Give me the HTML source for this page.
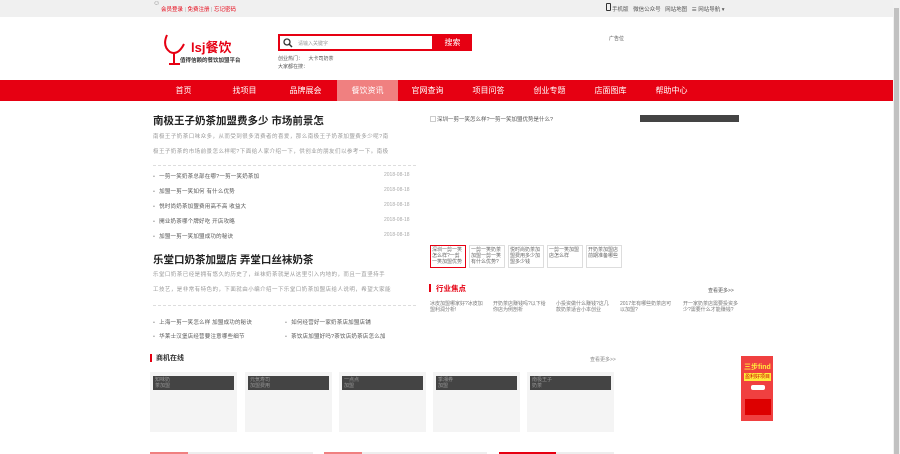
<!DOCTYPE html>
<html><head><meta charset="utf-8"><style>
*{margin:0;padding:0;box-sizing:border-box}
body{width:900px;height:454px;overflow:hidden;background:#fff;font-family:"Liberation Sans","Noto Sans CJK SC",sans-serif;font-size:6px;color:#666;position:relative}
.a{position:absolute;white-space:nowrap}
.top{position:absolute;left:0;top:0;width:893px;height:17px;background:#f0f0f0}
.nav{position:absolute;left:0;top:80px;width:893px;height:21px;background:#e60012}
.nav span{position:absolute;top:0;width:61px;height:21px;line-height:21px;text-align:center;color:#fff;font-size:8px}
.sb{position:absolute;right:0;top:0;width:7px;height:454px;background:#f1f1f1}
.sb i{position:absolute;left:1px;top:8px;width:5px;height:446px;background:#c1c1c1}
h2{position:absolute;font-size:10.5px;color:#222;font-weight:bold;white-space:nowrap}
.sm{color:#999;font-size:5.5px;letter-spacing:.45px}
.li{position:absolute;font-size:5.5px;color:#555;white-space:nowrap;letter-spacing:.2px}
.li:before{content:"•";color:#999;margin-right:4px}
.dt{position:absolute;font-size:5px;color:#aaa}
.dash{position:absolute;height:0;border-top:1px dashed #ddd}
.th{position:absolute;top:245px;width:36px;height:23px;border:1px solid #ddd;font-size:5px;color:#666;line-height:6px;padding:1px;overflow:hidden;white-space:normal}
.card{position:absolute;top:372px;width:87px;height:60px;background:#f4f4f4}
.card i{position:absolute;left:3px;top:4px;right:3px;height:14px;background:#444}
.card b{position:absolute;left:5px;top:5px;font-weight:normal;font-size:5px;color:#999;line-height:6px}
</style></head><body>
<div class="top"></div>
<div class="a" style="left:153px;top:0px;font-size:7px;color:#888">&#9786;</div>
<div class="a" style="left:161px;top:5px;font-size:5.5px;color:#e60012">会员登录 <span style="color:#aaa">|</span> 免费注册 <span style="color:#aaa">|</span> 忘记密码</div>
<div class="a" style="left:606px;top:3px;width:5px;height:8px;border:1px solid #333;border-radius:1px"></div>
<div class="a" style="left:612px;top:5px;font-size:5.5px;color:#555">手机版 &nbsp; 微信公众号 &nbsp; 网站地图 &nbsp; ☰ 网站导航 ▾</div>

<svg class="a" style="left:162px;top:32px" width="26" height="36" viewBox="0 0 26 36"><path d="M5 3 Q0 14 8 20 Q16 24 22 12" fill="none" stroke="#e60012" stroke-width="2"/><path d="M12 21 L12 31 M7 32 L18 32" stroke="#e60012" stroke-width="2"/></svg>
<div class="a" style="left:191px;top:37px;font-size:13px;color:#e60012;font-weight:bold">lsj餐饮</div>
<div class="a" style="left:180px;top:56px;font-size:5.5px;color:#333;font-weight:bold">值得信赖的餐饮加盟平台</div>

<div class="a" style="left:278px;top:34px;width:156px;height:17px;border:2px solid #e60012"></div>
<svg class="a" style="left:283px;top:38px" width="10" height="10"><circle cx="4" cy="4" r="3" fill="none" stroke="#333" stroke-width="1.3"/><path d="M6 6 L9 9" stroke="#333" stroke-width="1.5"/></svg>
<div class="a" style="left:298px;top:40px;font-size:5px;color:#999">请输入关键字</div>
<div class="a" style="left:433px;top:34px;width:39px;height:17px;background:#e60012;color:#fff;font-size:8px;text-align:center;line-height:17px">搜索</div>
<div class="a" style="left:278px;top:55px;font-size:5px;color:#555">创业热门： &nbsp;&nbsp; 大卡司奶茶</div>
<div class="a" style="left:278px;top:63px;font-size:5px;color:#555">大家都在搜：</div>
<div class="a" style="left:609px;top:35px;font-size:5px;color:#555">广告位</div>

<div class="nav">
<span style="left:153px">首页</span><span style="left:214px">找项目</span><span style="left:275px">品牌展会</span><span style="left:337px;background:#f08080">餐饮资讯</span><span style="left:397px">官网查询</span><span style="left:458px">项目问答</span><span style="left:519px">创业专题</span><span style="left:580px">店面图库</span><span style="left:641px">帮助中心</span>
</div>

<h2 style="left:153px;top:113px">南极王子奶茶加盟费多少 市场前景怎</h2>
<div class="a sm" style="left:153px;top:132px">南极王子奶茶口味众多，从而受到很多消费者的喜爱，那么南极王子奶茶加盟费多少呢?南</div>
<div class="a sm" style="left:153px;top:147px">极王子奶茶的市场前景怎么样呢?下面给人家介绍一下，供创业的朋友们以参考一下。南极</div>
<div class="dash" style="left:153px;top:165px;width:263px"></div>
<div class="li" style="left:153px;top:172px">一剪一笑奶茶总部在哪?一剪一笑奶茶加</div><div class="dt" style="left:384px;top:172px">2018-08-18</div>
<div class="li" style="left:153px;top:187px">加盟一剪一笑如何 有什么优势</div><div class="dt" style="left:384px;top:187px">2018-08-18</div>
<div class="li" style="left:153px;top:202px">悦时尚奶茶加盟费用高不高 收益大</div><div class="dt" style="left:384px;top:202px">2018-08-18</div>
<div class="li" style="left:153px;top:217px">開业奶茶哪个牌好吃 开店攻略</div><div class="dt" style="left:384px;top:217px">2018-08-18</div>
<div class="li" style="left:153px;top:232px">加盟一剪一笑加盟成功的秘诀</div><div class="dt" style="left:384px;top:232px">2018-08-18</div>

<h2 style="left:153px;top:252px">乐堂口奶茶加盟店 弄堂口丝袜奶茶</h2>
<div class="a sm" style="left:153px;top:270px">乐堂口奶茶已经是拥有悠久的历史了，丝袜奶茶就是从这里引入内地的，而且一直坚持手</div>
<div class="a sm" style="left:153px;top:285px">工技艺，是非常有特色的，下面就由小编介绍一下乐堂口奶茶加盟店给人说明，希望大家能</div>
<div class="dash" style="left:153px;top:305px;width:263px"></div>
<div class="li" style="left:153px;top:318px">上海一剪一笑怎么样 加盟成功的秘诀</div><div class="li" style="left:285px;top:318px">如何经营好一家奶茶店加盟店铺</div>
<div class="li" style="left:153px;top:332px">华莱士汉堡店经营要注意哪些细节</div><div class="li" style="left:285px;top:332px">茶饮店加盟好吗?茶饮店奶茶店怎么加</div>

<div class="a" style="left:430px;top:116px;width:6px;height:6px;border:1px solid #ccc"></div>
<div class="a" style="left:437px;top:115px;font-size:5.5px;color:#555">深圳一剪一笑怎么样?一剪一笑加盟优势是什么?</div>
<div class="a" style="left:640px;top:115px;width:99px;height:7px;background:#444"></div>
<div class="th" style="left:430px;border:1px solid #e60012">深圳一剪一笑怎么样?一剪一笑加盟优势</div>
<div class="th" style="left:469px">一剪一笑奶茶加盟一剪一笑有什么优势?</div>
<div class="th" style="left:508px">悦时尚奶茶加盟费用多少加盟多少钱</div>
<div class="th" style="left:547px">一剪一笑加盟店怎么样</div>
<div class="th" style="left:586px">开奶茶加盟店前期准备哪些</div>

<div class="a" style="left:429px;top:284px;width:2px;height:8px;background:#e60012"></div>
<div class="a" style="left:436px;top:283px;font-size:7.5px;color:#e60012;font-weight:bold">行业焦点</div>
<div class="a" style="left:708px;top:287px;font-size:5px;color:#555">查看更多>></div>
<div class="a" style="left:430px;top:301px;font-size:5px;color:#777;line-height:6px;white-space:normal;width:56px">冰皮加盟哪家好?冰皮加盟利润分析!</div>
<div class="a" style="left:493px;top:301px;font-size:5px;color:#777;line-height:6px;white-space:normal;width:56px">开奶茶店赚钱吗?以下给你店为例剖析</div>
<div class="a" style="left:556px;top:301px;font-size:5px;color:#777;line-height:6px;white-space:normal;width:56px">小投资做什么赚钱?这几款奶茶适合小本创业</div>
<div class="a" style="left:620px;top:301px;font-size:5px;color:#777;line-height:6px;white-space:normal;width:56px">2017年有哪些奶茶店可以加盟?</div>
<div class="a" style="left:683px;top:301px;font-size:5px;color:#777;line-height:6px;white-space:normal;width:56px">开一家奶茶店需要投资多少?需要什么才能赚钱?</div>

<div class="a" style="left:150px;top:354px;width:2px;height:8px;background:#e60012"></div>
<div class="a" style="left:156px;top:353px;font-size:7px;color:#333;font-weight:bold">商机在线</div>
<div class="a" style="left:590px;top:356px;font-size:5px;color:#888">查看更多>></div>
<div class="card" style="left:150px"><i></i><b>知味奶<br>茶加盟</b></div>
<div class="card" style="left:245px"><i></i><b>元気寿司<br>加盟费用</b></div>
<div class="card" style="left:339px"><i></i><b>一点点<br>加盟</b></div>
<div class="card" style="left:433px"><i></i><b>季湘券<br>加盟</b></div>
<div class="card" style="left:527px"><i></i><b>南极王子<br>奶茶</b></div>
<div class="a" style="left:741px;top:356px;width:32px;height:65px;background:#f04040"></div>
<div class="a" style="left:744px;top:362px;font-size:7px;color:#ffeb3b;font-weight:bold">三步find</div>
<div class="a" style="left:744px;top:373px;width:27px;height:8px;background:#ffeb3b;font-size:5px;color:#c00;text-align:center;line-height:8px">盈利好项目</div>
<div class="a" style="left:751px;top:385px;width:14px;height:5px;background:#fff;border-radius:2px"></div>
<div class="a" style="left:745px;top:399px;width:26px;height:16px;background:#d00"></div>

<div class="a" style="left:150px;top:452px;width:38px;height:2px;background:#f08080"></div>
<div class="a" style="left:188px;top:452px;width:125px;height:2px;background:#eee"></div>
<div class="a" style="left:324px;top:452px;width:38px;height:2px;background:#f08080"></div>
<div class="a" style="left:362px;top:452px;width:125px;height:2px;background:#eee"></div>
<div class="a" style="left:499px;top:452px;width:57px;height:2px;background:#e60012"></div>
<div class="a" style="left:556px;top:452px;width:58px;height:2px;background:#eee"></div>
<div class="sb"><i></i></div>
</body></html>
